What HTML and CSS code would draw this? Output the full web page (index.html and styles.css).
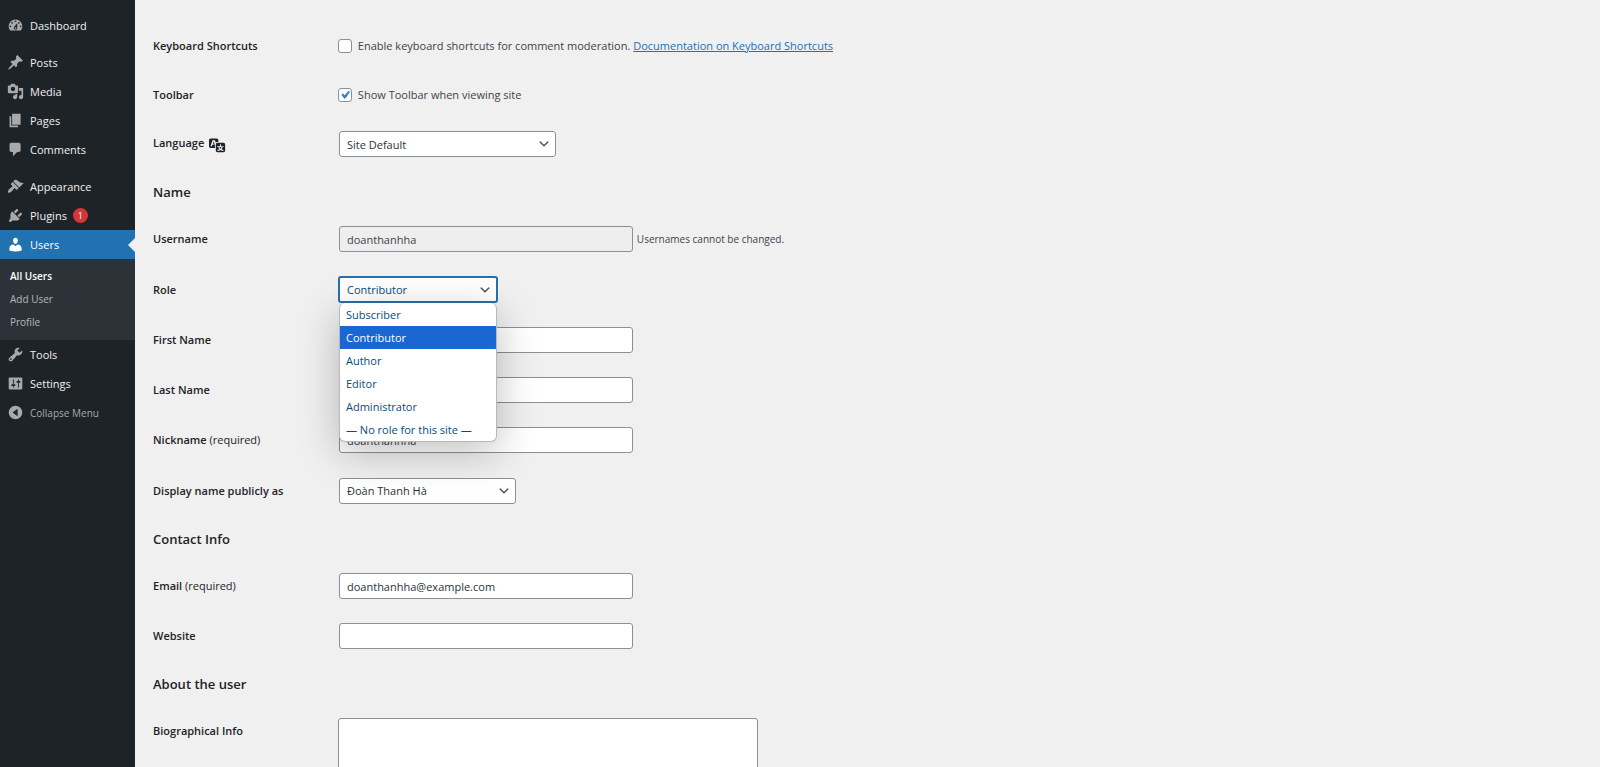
FILE: index.html
```
<!DOCTYPE html>
<html lang="en">

<head>
    <meta charset="UTF-8">
    <meta name="viewport" content="width=device-width, initial-scale=1.0">
    <title>Edit User</title>
    <link rel="stylesheet" href="styles.css">
</head>

<body>

    <div class="wrapper">
        <nav class="menu" aria-label="Main menu">
            <a class="menu-item" href="#">
                <svg class="icon" viewBox="0 0 20 20"><path d="M3.76 16h12.48c1.1-1.37 1.76-3.11 1.76-5 0-4.42-3.58-8-8-8s-8 3.58-8 8c0 1.89.66 3.63 1.76 5zM10 4c.55 0 1 .45 1 1s-.45 1-1 1-1-.45-1-1 .45-1 1-1zM6 6c.55 0 1 .45 1 1s-.45 1-1 1-1-.45-1-1 .45-1 1-1zm8 0c.55 0 1 .45 1 1s-.45 1-1 1-1-.45-1-1 .45-1 1-1zm-5.37 5.55L12 7v6c0 1.1-.9 2-2 2s-2-.9-2-2c0-.57.24-1.08.63-1.45zM4 10c.55 0 1 .45 1 1s-.45 1-1 1-1-.45-1-1 .45-1 1-1zm12 0c.55 0 1 .45 1 1s-.45 1-1 1-1-.45-1-1 .45-1 1-1zm-5 3c0-.55-.45-1-1-1s-1 .45-1 1 .45 1 1 1 1-.45 1-1z"/></svg>
                Dashboard
            </a>
            <div class="separator"></div>
            <a class="menu-item" href="#">
                <svg class="icon" viewBox="0 0 20 20"><path d="M10.44 3.02l1.82-1.82 6.36 6.35-1.83 1.82c-1.05-.68-2.48-.57-3.41.36l-.75.75c-.92.93-1.04 2.35-.35 3.41l-1.83 1.82-2.41-2.41-2.8 2.79c-.42.42-3.38 2.71-3.8 2.29s1.86-3.39 2.28-3.81l2.79-2.79L4.1 9.36l1.83-1.82c1.05.69 2.48.57 3.4-.36l.75-.75c.93-.92 1.05-2.35.36-3.41z"/></svg>
                Posts
            </a>
            <a class="menu-item" href="#">
                <svg class="icon" viewBox="0 0 20 20"><path d="M13 11V4c0-.55-.45-1-1-1h-1.67L9 1H5L3.67 3H2c-.55 0-1 .45-1 1v7c0 .55.45 1 1 1h10c.55 0 1-.45 1-1zM7 4.5c1.38 0 2.5 1.12 2.5 2.5S8.38 9.5 7 9.5 4.5 8.38 4.5 7 5.62 4.5 7 4.5zM14 6h5v10.5c0 1.38-1.12 2.5-2.5 2.5S14 17.88 14 16.5s1.12-2.5 2.5-2.5c.17 0 .34.02.5.05V9h-3V6zm-4 8.05V13h2v3.5c0 1.38-1.12 2.5-2.5 2.5S7 17.88 7 16.5 8.12 14 9.5 14c.17 0 .34.02.5.05z"/></svg>
                Media
            </a>
            <a class="menu-item" href="#">
                <svg class="icon" viewBox="0 0 20 20"><path d="M6 15V2h10v13H6zm-1 1h8v2H3V5h2v11z"/></svg>
                Pages
            </a>
            <a class="menu-item" href="#">
                <svg class="icon" viewBox="0 0 20 20"><path d="M5 2h9c1.1 0 2 .9 2 2v7c0 1.1-.9 2-2 2h-2l-5 5v-5H5c-1.1 0-2-.9-2-2V4c0-1.1.9-2 2-2z"/></svg>
                Comments
            </a>
            <div class="separator"></div>
            <a class="menu-item" href="#">
                <svg class="icon" viewBox="0 0 20 20"><path d="M14.48 11.06L7.41 3.99l1.5-1.5c.5-.56 2.3-.47 3.51.32 1.21.8 1.43 1.28 2.91 2.1 1.18.64 2.45 1.26 4.45.85zm-.71.71L6.7 4.7 4.93 6.47c-.39.39-.39 1.02 0 1.41l1.06 1.06c.39.39.39 1.03 0 1.42-.6.6-1.43 1.11-2.21 1.69-.35.26-.7.53-1.01.84C1.43 14.23.4 16.08 1.4 17.07c.99 1 2.84-.03 4.18-1.36.31-.31.58-.66.85-1.02.57-.78 1.08-1.61 1.69-2.21.39-.39 1.02-.39 1.41 0l1.06 1.06c.39.39 1.02.39 1.41 0z"/></svg>
                Appearance
            </a>
            <a class="menu-item" href="#">
                <svg class="icon" viewBox="0 0 20 20"><path d="M13.11 4.36L9.87 7.6 8 5.73l3.24-3.24c.35-.34 1.05-.2 1.56.32.52.51.66 1.21.31 1.55zm-8 1.77l.91-1.12 9.01 9.01-1.19.84c-.71.71-2.63 1.16-3.82 1.16H6.14L4.9 17.26c-.59.59-1.54.59-2.12 0-.59-.58-.59-1.53 0-2.12l1.24-1.24v-3.88c0-1.13.4-3.19 1.09-3.89zm7.26 3.97l3.24-3.24c.34-.35 1.04-.21 1.55.31.52.51.66 1.21.31 1.55l-3.24 3.25z"/></svg>
                Plugins <span class="badge">1</span>
            </a>
            <a class="menu-item current" href="#">
                <svg class="icon" viewBox="0 0 20 20"><path d="M10 9.25c-2.27 0-2.73-3.44-2.73-3.44C7 4.02 7.82 2 9.97 2c2.16 0 2.98 2.02 2.71 3.81 0 0-.41 3.44-2.68 3.44zm0 2.57L12.72 10c2.39 0 4.52 2.33 4.52 4.53v2.49s-3.65 1.13-7.24 1.13c-3.65 0-7.24-1.13-7.24-1.13v-2.49c0-2.25 1.94-4.48 4.47-4.48z"/></svg>
                Users
            </a>
            <div class="submenu">
                <a class="submenu-item active" href="#">All Users</a>
                <a class="submenu-item" href="#">Add User</a>
                <a class="submenu-item" href="#">Profile</a>
            </div>
            <a class="menu-item" href="#">
                <svg class="icon" viewBox="0 0 20 20"><path d="M16.68 9.77c-1.34 1.34-3.3 1.67-4.95.99l-5.41 6.52c-.99.99-2.59.99-3.58 0s-.99-2.59 0-3.57l6.52-5.42c-.68-1.65-.35-3.61.99-4.95 1.28-1.28 3.12-1.62 4.72-1.06l-2.89 2.89 2.82 2.82 2.86-2.87c.53 1.58.18 3.39-1.08 4.65zM3.81 16.21c.4.39 1.04.39 1.43 0 .4-.4.4-1.04 0-1.43-.39-.4-1.03-.4-1.43 0-.39.39-.39 1.03 0 1.43z"/></svg>
                Tools
            </a>
            <a class="menu-item" href="#">
                <svg class="icon" viewBox="0 0 20 20"><path d="M18 16V4c0-.55-.45-1-1-1H3c-.55 0-1 .45-1 1v12c0 .55.45 1 1 1h14c.55 0 1-.45 1-1zM8 11h1c.55 0 1 .45 1 1s-.45 1-1 1H8v1.5c0 .28-.22.5-.5.5s-.5-.22-.5-.5V13H6c-.55 0-1-.45-1-1s.45-1 1-1h1V5.5c0-.28.22-.5.5-.5s.5.22.5.5V11zm5-2h-1c-.55 0-1-.45-1-1s.45-1 1-1h1V5.5c0-.28.22-.5.5-.5s.5.22.5.5V7h1c.55 0 1 .45 1 1s-.45 1-1 1h-1v5.5c0 .28-.22.5-.5.5s-.5-.22-.5-.5V9z"/></svg>
                Settings
            </a>
            <button type="button" class="menu-item collapse">
                <svg class="icon" viewBox="0 0 20 20"><path fill-rule="evenodd" d="M10 2a8 8 0 1 1 0 16 8 8 0 0 1 0-16zM12.500 5.500v9L6.500 10z"/></svg>
                Collapse Menu
            </button>
        </nav>

        <main class="content">
            <form>
                <table class="form-table">
                    <tr class="row-check">
                        <th scope="row">Keyboard Shortcuts</th>
                        <td>
                            <input type="checkbox" id="shortcuts">
                            <label for="shortcuts">Enable keyboard shortcuts for comment moderation.</label>
                            <a href="#">Documentation on Keyboard Shortcuts</a>
                        </td>
                    </tr>
                    <tr class="row-check">
                        <th scope="row">Toolbar</th>
                        <td>
                            <input type="checkbox" id="toolbar" checked>
                            <label for="toolbar">Show Toolbar when viewing site</label>
                        </td>
                    </tr>
                    <tr>
                        <th scope="row">
                            <label for="language">Language
                                <svg class="icon-lang" viewBox="0 0 20 20"><path d="M11 7H9.490c-.63 0-1.250.3-1.590.7L7 5H4.130l-2.390 7h1.690l.74-2H7v4H2c-1.100 0-2-.9-2-2V5c0-1.100.9-2 2-2h7c1.100 0 2 .9 2 2v2zM6.510 9H4.490l1-2.930zM10 8h7c1.100 0 2 .9 2 2v7c0 1.100-.9 2-2 2h-7c-1.100 0-2-.9-2-2v-7c0-1.100.9-2 2-2zm7.250 5v-1.080h-3.170V9.750h-1.160v2.170H9.750V13h1.280c.11.85.56 1.850 1.280 2.620-.87.36-1.890.62-2.310.62-.01.02.22.97.2 1.460.84 0 2.210-.5 3.280-1.150 1.090.65 2.480 1.150 3.340 1.150-.02-.49.2-1.440.2-1.460-.43 0-1.490-.27-2.380-.63.7-.77 1.140-1.770 1.250-2.610h1.360zm-3.810 1.930c-.5-.46-.85-1.130-1.010-1.930h2.090c-.17.8-.51 1.470-1 1.930l-.04.03s-.03-.02-.04-.03z"/></svg>
                            </label>
                        </th>
                        <td>
                            <select id="language" class="select-language">
                                <option>Site Default</option>
                            </select>
                        </td>
                    </tr>
                </table>

                <h2>Name</h2>
                <table class="form-table">
                    <tr>
                        <th scope="row"><label for="username">Username</label></th>
                        <td>
                            <input type="text" id="username" value="doanthanhha" disabled>
                            <span class="description">Usernames cannot be changed.</span>
                        </td>
                    </tr>
                    <tr class="row-select">
                        <th scope="row"><label for="role">Role</label></th>
                        <td>
                            <div class="role">
                                <select id="role" class="select-role">
                                    <option>Subscriber</option>
                                    <option selected>Contributor</option>
                                    <option>Author</option>
                                    <option>Editor</option>
                                    <option>Administrator</option>
                                    <option>— No role for this site —</option>
                                </select>
                                <ul class="role-list">
                                    <li>Subscriber</li>
                                    <li class="selected">Contributor</li>
                                    <li>Author</li>
                                    <li>Editor</li>
                                    <li>Administrator</li>
                                    <li>— No role for this site —</li>
                                </ul>
                            </div>
                        </td>
                    </tr>
                    <tr>
                        <th scope="row"><label for="first-name">First Name</label></th>
                        <td><input type="text" id="first-name"></td>
                    </tr>
                    <tr>
                        <th scope="row"><label for="last-name">Last Name</label></th>
                        <td><input type="text" id="last-name"></td>
                    </tr>
                    <tr>
                        <th scope="row"><label for="nickname">Nickname <span class="required">(required)</span></label></th>
                        <td><input type="text" id="nickname" value="doanthanhha"></td>
                    </tr>
                    <tr class="row-select">
                        <th scope="row"><label for="display-name">Display name publicly as</label></th>
                        <td>
                            <select id="display-name" class="select-display">
                                <option>Đoàn Thanh Hà</option>
                            </select>
                        </td>
                    </tr>
                </table>

                <h2>Contact Info</h2>
                <table class="form-table">
                    <tr>
                        <th scope="row"><label for="email">Email <span class="required">(required)</span></label></th>
                        <td><input type="text" id="email" value="doanthanhha@example.com"></td>
                    </tr>
                    <tr>
                        <th scope="row"><label for="website">Website</label></th>
                        <td><input type="text" id="website"></td>
                    </tr>
                </table>

                <h2>About the user</h2>
                <table class="form-table">
                    <tr class="row-bio">
                        <th scope="row"><label for="bio">Biographical Info</label></th>
                        <td><textarea id="bio" rows="5"></textarea></td>
                    </tr>
                </table>
            </form>
        </main>
    </div>

</body>

</html>
```

FILE: styles.css
```
* {
    box-sizing: border-box;
}

body {
    margin: 0;
    background-color: #f0f0f0;
    color: #3c434a;
    font-family: "Open Sans", "Noto Sans", sans-serif;
    font-size: 11px;
    line-height: 16px;
}

input,
select,
textarea,
button {
    font-family: inherit;
    font-size: inherit;
}

.wrapper {
    display: flex;
    height: 100vh;
    overflow: hidden;
}

/* Menu */

.menu {
    flex: none;
    width: 135px;
    padding-top: 11px;
    background-color: #1d2327;
}

.menu-item {
    position: relative;
    display: flex;
    align-items: center;
    width: 100%;
    height: 29px;
    padding: 0 7px;
    border: none;
    background: none;
    color: #f0f0f1;
    text-decoration: none;
}

.icon {
    width: 17px;
    height: 17px;
    margin-right: 6px;
    fill: #a7aaad;
}

.separator {
    height: 8px;
}

.badge {
    width: 15px;
    height: 15px;
    margin-left: 6px;
    border-radius: 50%;
    background-color: #d63638;
    color: #fff;
    font-size: 9px;
    line-height: 15px;
    text-align: center;
}

.current {
    background-color: #2271b1;
    color: #fff;
}

.current .icon {
    fill: #fff;
}

/* Arrow that points at the open section */
.current::after {
    content: "";
    position: absolute;
    right: 0;
    top: 8px;
    border: 7px solid transparent;
    border-right-color: #f0f0f0;
    border-left: none;
}

.submenu {
    padding: 6px 0;
    background-color: #2c3338;
}

.submenu-item {
    display: block;
    padding: 0 10px;
    color: #b5b8bb;
    font-size: 10px;
    line-height: 23px;
    text-decoration: none;
}

.submenu-item.active {
    color: #fff;
    font-weight: 600;
}

.collapse {
    color: #a7aaad;
    font-size: 10px;
    cursor: pointer;
}

/* Form */

.content {
    flex: 1;
    padding: 21px 18px 0;
}

h2 {
    margin: 13px 0 12px;
    color: #1d2327;
    font-size: 13px;
    font-weight: 600;
    line-height: 20px;
}

.form-table {
    width: 100%;
    border-collapse: collapse;
}

.form-table tr {
    height: 50px;
}

.form-table .row-check {
    height: 49px;
}

.form-table .row-select {
    height: 51px;
}

.form-table th {
    width: 185px;
    padding: 0;
    color: #1d2327;
    font-weight: 600;
    text-align: left;
}

.form-table td {
    padding: 0;
}

.required {
    font-weight: 500;
}

.icon-lang {
    width: 17px;
    height: 17px;
    margin-left: 2px;
    vertical-align: middle;
    fill: #1d2327;
}

a {
    color: #2271b1;
}

input[type="text"],
select {
    height: 26px;
    margin: 0 1px;
    padding: 0 7px;
    border: 1px solid #8c8f94;
    border-radius: 3px;
    background-color: #fff;
    color: #2c3338;
    vertical-align: middle;
}

input[type="text"] {
    width: 294px;
}

input[type="text"]:disabled {
    background-color: #eee;
    color: #3c434a;
}

.description {
    font-size: 10px;
    vertical-align: middle;
}

input[type="checkbox"] {
    appearance: none;
    width: 14px;
    height: 14px;
    margin: 0 3px 0 0;
    border: 1px solid #8c8f94;
    border-radius: 3px;
    background-color: #fff;
    vertical-align: middle;
}

input[type="checkbox"]:checked {
    background-image: url("data:image/svg+xml,%3Csvg xmlns='http://www.w3.org/2000/svg' viewBox='0 0 20 20'%3E%3Cpath d='M14.830 4.890l1.340.94-5.810 8.380H9.020L5.780 9.670l1.340-1.250 2.570 2.400z' fill='%233582c4' stroke='%233582c4'/%3E%3C/svg%3E");
    background-position: center;
    background-size: 15px;
}

input[type="checkbox"] ~ label,
input[type="checkbox"] ~ a {
    vertical-align: middle;
}

select {
    appearance: none;
    background-image: url("data:image/svg+xml,%3Csvg xmlns='http://www.w3.org/2000/svg' viewBox='0 0 20 20'%3E%3Cpath d='M5 6l5 5 5-5 2 1-7 7-7-7 2-1z' fill='%23555'/%3E%3C/svg%3E");
    background-repeat: no-repeat;
    background-position: right 4px center;
    background-size: 14px;
}

.select-language {
    width: 217px;
}

.select-display {
    width: 177px;
}

.role {
    position: relative;
    width: 160px;
}

.select-role {
    display: block;
    width: 100%;
    height: 27px;
    margin: 0;
    border: 2px solid #2271b1;
    color: #0a4b78;
}

.role-list {
    position: absolute;
    top: 100%;
    left: 1px;
    right: 1px;
    z-index: 1;
    margin: 0;
    padding: 0;
    overflow: hidden;
    border: 1px solid #b8b8b8;
    border-top: none;
    border-radius: 6px;
    background-color: #fff;
    box-shadow: 0 10px 40px rgba(0, 0, 0, 0.25);
    color: #0a4b78;
    list-style: none;
}

.role-list li {
    padding: 0 6px;
    line-height: 23px;
}

.role-list .selected {
    background-color: #1967d2;
    color: #fff;
}

.row-bio th {
    padding-top: 17px;
    vertical-align: top;
}

.row-bio td {
    padding-top: 12px;
}

textarea {
    display: block;
    width: 420px;
    max-width: 100%;
    padding: 4px 7px;
    border: 1px solid #8c8f94;
    border-radius: 3px;
    background-color: #fff;
    color: #2c3338;
}
```
